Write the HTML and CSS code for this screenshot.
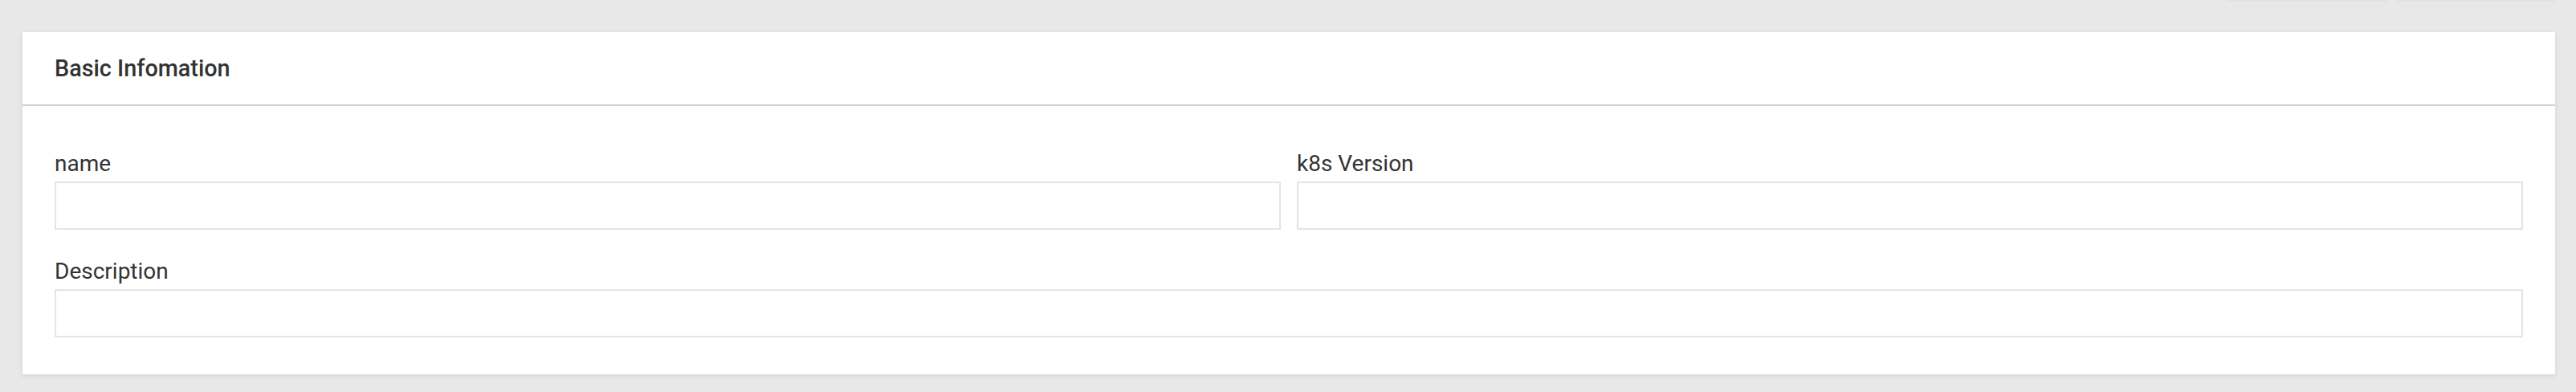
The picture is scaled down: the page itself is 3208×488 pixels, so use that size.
FILE: index.html
```html
<!DOCTYPE html>
<html lang="en">
<head>
<meta charset="utf-8">
<title>Basic Infomation</title>
<link rel="stylesheet" href="styles.css">
</head>
<body>
<div class="page">
  <div class="toolbar-edge">
    <span class="edge-btn edge-btn-a"></span>
    <span class="edge-btn edge-btn-b"></span>
  </div>
  <section class="card">
    <header class="card-header">
      <h2 class="card-title">Basic Infomation</h2>
    </header>
    <div class="card-body">
      <div class="form-grid">
        <div class="field">
          <label class="field-label" for="name">name</label>
          <input class="field-input" id="name" type="text">
        </div>
        <div class="field">
          <label class="field-label" for="k8s">k8s Version</label>
          <input class="field-input" id="k8s" type="text">
        </div>
        <div class="field field-wide">
          <label class="field-label" for="desc">Description</label>
          <input class="field-input" id="desc" type="text">
        </div>
      </div>
    </div>
  </section>
</div>
</body>
</html>
```
FILE: styles.css
```css
html, body {
  margin: 0;
  padding: 0;
}
body {
  background: #e8e8e8;
  font-family: Roboto, "Liberation Sans", Arial, sans-serif;
  color: #333;
  width: 3208px;
  height: 488px;
  overflow: hidden;
}
.page {
  padding: 0 26px 0 28px;
}
.toolbar-edge {
  display: flex;
  justify-content: flex-end;
  gap: 10px;
  height: 2px;
  margin-right: -1px;
}
.edge-btn {
  display: block;
  height: 2px;
  background: #e2e2e2;
}
.edge-btn-a { width: 200px; }
.edge-btn-b { width: 199px; }
.card {
  margin-top: 38px;
  background: #fff;
  box-shadow: 0 2px 6px rgba(0, 0, 0, 0.09);
}
.card-header {
  padding: 25px 40px 25px;
  border-bottom: 2px solid #cfcfcf;
}
.card-title {
  margin: 0;
  font-size: 28.8px;
  line-height: 40px;
  font-weight: 500;
  color: #333;
}
.card-body {
  padding: 52px 40px 46px;
}
.form-grid {
  display: grid;
  grid-template-columns: 1fr 1fr;
  column-gap: 20px;
  row-gap: 32px;
}
.field-wide {
  grid-column: 1 / -1;
}
.field {
  display: flex;
  flex-direction: column;
  gap: 2px;
}
.field-label {
  font-size: 28px;
  line-height: 40px;
  font-weight: 400;
  color: #333;
}
.field-input {
  box-sizing: border-box;
  height: 60px;
  width: 100%;
  margin: 0;
  border: 2px solid #e4e4e4;
  border-radius: 0;
  background: #fff;
  font-family: inherit;
  font-size: 28px;
  padding: 0 16px;
  outline: none;
}
```
